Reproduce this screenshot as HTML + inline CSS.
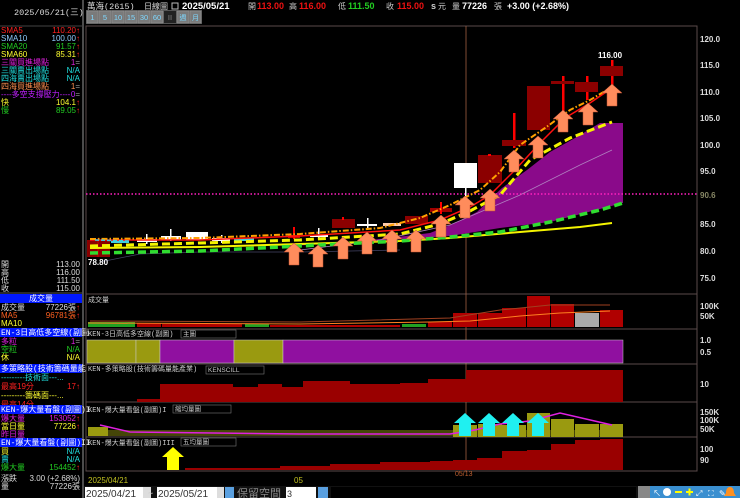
<!DOCTYPE html><html><head><meta charset="utf-8"><style>
body{margin:0;background:#000;width:740px;height:498px;overflow:hidden}
svg{display:block}
text{font-family:"Liberation Sans","Noto Sans CJK TC",sans-serif}
.s{font-family:"Liberation Mono","Noto Sans CJK TC",monospace;font-size:8px}
</style></head><body>
<svg width="740" height="498" viewBox="0 0 740 498" xmlns="http://www.w3.org/2000/svg">
<rect width="740" height="498" fill="#000"/>
<!-- left panel -->
<line x1="83" y1="0" x2="83" y2="498" stroke="#666" stroke-width="1.5"/>
<line x1="0" y1="26" x2="83" y2="26" stroke="#444"/>
<text x="14" y="15" fill="#ddd" class="s" style="font-size:8.5px">2025/05/21(三)</text>
<g class="s" font-size="8">
<text x="1" y="33" fill="#ff2020">SMA5</text><text x="80" y="33" fill="#ff2020" text-anchor="end">110.20↑</text>
<text x="1" y="41" fill="#8ecbff">SMA10</text><text x="80" y="41" fill="#8ecbff" text-anchor="end">100.00<tspan fill="#f22">↑</tspan></text>
<text x="1" y="49" fill="#22cc22">SMA20</text><text x="80" y="49" fill="#22cc22" text-anchor="end">91.57<tspan fill="#f22">↑</tspan></text>
<text x="1" y="57" fill="#ffff30">SMA60</text><text x="80" y="57" fill="#ffff30" text-anchor="end">85.31<tspan fill="#f22">↑</tspan></text>
<text x="1" y="65" fill="#e020e0">三關買進場點</text><text x="80" y="65" fill="#e020e0" text-anchor="end">1<tspan fill="#999">=</tspan></text>
<text x="1" y="73" fill="#20e0e0">三關賣出場點</text><text x="80" y="73" fill="#20e0e0" text-anchor="end">N/A</text>
<text x="1" y="81" fill="#20e0e0">四海賣出場點</text><text x="80" y="81" fill="#20e0e0" text-anchor="end">N/A</text>
<text x="1" y="89" fill="#ff9050">四海買進場點</text><text x="80" y="89" fill="#ff9050" text-anchor="end">1<tspan fill="#999">=</tspan></text>
<text x="1" y="97" fill="#c020ff">----多空支撐壓力----</text><text x="80" y="97" fill="#c020ff" text-anchor="end">0<tspan fill="#999">=</tspan></text>
<text x="1" y="105" fill="#ffff30">快</text><text x="80" y="105" fill="#ffff30" text-anchor="end">104.1<tspan fill="#f22">↑</tspan></text>
<text x="1" y="113" fill="#22cc22">慢</text><text x="80" y="113" fill="#22cc22" text-anchor="end">89.05<tspan fill="#f22">↑</tspan></text>
<text x="1" y="267" fill="#ddd">開</text><text x="80" y="267" fill="#ddd" text-anchor="end">113.00</text>
<text x="1" y="275" fill="#ddd">高</text><text x="80" y="275" fill="#ddd" text-anchor="end">116.00</text>
<text x="1" y="283" fill="#ddd">低</text><text x="80" y="283" fill="#ddd" text-anchor="end">111.50</text>
<text x="1" y="291" fill="#ddd">收</text><text x="80" y="291" fill="#ddd" text-anchor="end">115.00</text>
</g>
<line x1="0" y1="293" x2="83" y2="293" stroke="#555"/>
<rect x="0" y="294" width="82" height="9" fill="#0018ff"/>
<text x="41" y="301" fill="#fff" class="s" text-anchor="middle">成交量</text>
<g class="s">
<text x="1" y="310" fill="#ddd">成交量</text><text x="80" y="310" fill="#ddd" text-anchor="end">77226張<tspan fill="#f22">↑</tspan></text>
<text x="1" y="318" fill="#ff6020">MA5</text><text x="80" y="318" fill="#ff6020" text-anchor="end">96781張<tspan fill="#f22">↑</tspan></text>
<text x="1" y="326" fill="#ffff30">MA10</text>
</g>
<rect x="0" y="328" width="82" height="9" fill="#0018ff"/>
<text x="1" y="335" fill="#fff" class="s">EN-3日高低多空線(副圖</text>
<g class="s">
<text x="1" y="344" fill="#e020e0">多粒</text><text x="80" y="344" fill="#e020e0" text-anchor="end">1<tspan fill="#999">=</tspan></text>
<text x="1" y="352" fill="#22cc22">空粒</text><text x="80" y="352" fill="#22cc22" text-anchor="end">N/A</text>
<text x="1" y="360" fill="#ffff30">休</text><text x="80" y="360" fill="#ffff30" text-anchor="end">N/A</text>
</g>
<rect x="0" y="364" width="82" height="9" fill="#0018ff"/>
<text x="1" y="371" fill="#fff" class="s">多策略股(技術籌碼量能</text>
<g class="s">
<text x="1" y="380" fill="#20e0e0">---------技術面---...</text>
<text x="1" y="389" fill="#ff2020">最高19分</text><text x="80" y="389" fill="#ff2020" text-anchor="end">17↑</text>
<text x="1" y="398" fill="#ffff30">---------籌碼面---...</text>
<text x="1" y="407" fill="#ff2020">最高14分</text>
</g>
<rect x="0" y="405" width="82" height="9" fill="#0018ff"/>
<text x="1" y="412" fill="#fff" class="s">KEN-爆大量看盤(副圖)I</text>
<g class="s">
<text x="1" y="421" fill="#e020e0">爆大量</text><text x="80" y="421" fill="#e020e0" text-anchor="end">153052<tspan fill="#f22">↑</tspan></text>
<text x="1" y="429" fill="#ffff30">當日量</text><text x="80" y="429" fill="#ffff30" text-anchor="end">77226<tspan fill="#f22">↑</tspan></text>
<text x="1" y="437" fill="#e020e0">昨日量</text>
</g>
<rect x="0" y="438" width="82" height="9" fill="#0018ff"/>
<text x="1" y="445" fill="#fff" class="s">EN-爆大量看盤(副圖)II</text>
<g class="s">
<text x="1" y="454" fill="#ffff30">買</text><text x="80" y="454" fill="#20e0e0" text-anchor="end">N/A</text>
<text x="1" y="462" fill="#20e0e0">賣</text><text x="80" y="462" fill="#20e0e0" text-anchor="end">N/A</text>
<text x="1" y="470" fill="#22cc22">爆大量</text><text x="80" y="470" fill="#22cc22" text-anchor="end">154452<tspan fill="#f22">↑</tspan></text>
<text x="1" y="481" fill="#ddd">漲跌</text><text x="80" y="481" fill="#ddd" text-anchor="end">3.00 (+2.68%)</text>
<text x="1" y="489" fill="#ddd">量</text><text x="80" y="489" fill="#ddd" text-anchor="end">77226張</text>
</g>
<!-- header -->
<g font-size="9">
<text x="87" y="9" fill="#ddd" class="s" style="font-size:8.5px">萬海(2615)</text>
<text x="144" y="9" fill="#ddd" class="s">日線圖</text>
<rect x="172" y="3" width="6" height="6" fill="none" stroke="#bbb"/>
<text x="182" y="9" fill="#fff" font-weight="bold" font-size="9.5">2025/05/21</text>
<text x="248" y="9" fill="#ccc" class="s">開</text><text x="257" y="9" fill="#ee1111" font-weight="bold">113.00</text>
<text x="289" y="9" fill="#ccc" class="s">高</text><text x="299" y="9" fill="#ee1111" font-weight="bold">116.00</text>
<text x="338" y="9" fill="#ccc" class="s">低</text><text x="348" y="9" fill="#22cc22" font-weight="bold">111.50</text>
<text x="386" y="9" fill="#ccc" class="s">收</text><text x="397" y="9" fill="#ee1111" font-weight="bold">115.00</text>
<text x="431" y="9" fill="#ccc" font-weight="bold">s</text><text x="438" y="9" fill="#ccc" class="s">元</text>
<text x="452" y="9" fill="#ccc" class="s">量</text><text x="462" y="9" fill="#fff" font-weight="bold">77226</text><text x="494" y="9" fill="#ccc" class="s">張</text>
<text x="507" y="9" fill="#fff" font-weight="bold">+3.00 (+2.68%)</text>
</g>
<rect x="86" y="10" width="116" height="14" fill="#555"/>
<g fill="#7a7a7a" stroke="#999" stroke-width=".5">
<rect x="87" y="11" width="11" height="12"/><rect x="99" y="11" width="12" height="12"/><rect x="112" y="11" width="12" height="12"/><rect x="125" y="11" width="12" height="12"/><rect x="138" y="11" width="12" height="12"/><rect x="151" y="11" width="12" height="12"/><rect x="177" y="11" width="12" height="12"/><rect x="190" y="11" width="11" height="12"/>
</g>
<rect x="164" y="11" width="12" height="12" fill="#222"/>
<g fill="#7fd8ff" font-size="7.5" text-anchor="middle">
<text x="92.5" y="20">1</text><text x="105" y="20">5</text><text x="118" y="20">10</text><text x="131" y="20">15</text><text x="144" y="20">30</text><text x="157" y="20">60</text><text x="170" y="20" fill="#888">II</text><text x="183" y="20" class="s" style="font-size:7px">週</text><text x="195.5" y="20" class="s" style="font-size:7px">月</text>
</g>
<!-- chart frame -->
<rect x="86" y="26" width="611" height="445" fill="none" stroke="#5a4a4a"/>
<g stroke="#5a4a4a"><line x1="86" y1="294" x2="697" y2="294"/><line x1="86" y1="329" x2="697" y2="329"/><line x1="86" y1="364" x2="697" y2="364"/><line x1="86" y1="402" x2="697" y2="402"/><line x1="86" y1="437" x2="697" y2="437"/></g>
<line x1="466" y1="26" x2="466" y2="471" stroke="#a06040" stroke-width=".8"/>
<!-- price axis -->
<g fill="#ddd" font-size="8" font-weight="bold">
<text x="700" y="42">120.0</text><text x="700" y="68">115.0</text><text x="700" y="95">110.0</text><text x="700" y="121">105.0</text><text x="700" y="148">100.0</text><text x="700" y="174">95.0</text><text x="700" y="198" fill="#886">90.6</text><text x="700" y="227">85.0</text><text x="700" y="254">80.0</text><text x="700" y="281">75.0</text>
<text x="700" y="309">100K</text><text x="700" y="319">50K</text><text x="700" y="343">1.0</text><text x="700" y="355">0.5</text><text x="700" y="387">10</text>
<text x="700" y="415">150K</text><text x="700" y="423">100K</text><text x="700" y="432">50K</text><text x="700" y="452">100</text><text x="700" y="463">90</text>
</g>
<!-- purple area -->
<polygon fill="#8a0a8a" points="290,245 340,243 390,238 430,233 453,224 477,212 502,188 527,170 550,152 575,138 600,123 623,123 623,203 550,222 500,228 450,236 390,240 340,243 290,246"/>
<polyline fill="none" stroke="#b080c0" stroke-width=".8" points="300,250 380,240 450,225 520,195 580,165 612,150"/>
<line x1="86" y1="194" x2="697" y2="194" stroke="#ff20c0" stroke-width="1.5" stroke-dasharray="1.5,2"/>
<polyline fill="none" stroke="#446" stroke-width=".8" points="100,262 140,254 200,252 300,252 400,250"/>
<!-- candles -->
<rect x="87" y="240" width="23" height="17" fill="#8b0000"/>
<line x1="98" y1="238" x2="98" y2="257" stroke="#c00"/>
<g fill="#fff">
<rect x="111" y="240" width="18" height="3" fill="#40d0e0"/>
<rect x="137" y="239" width="20" height="3"/><rect x="146" y="234" width="1.5" height="10"/>
<rect x="161" y="236" width="20" height="4"/><rect x="170" y="229" width="1.5" height="12"/>
<rect x="186" y="232" width="22" height="8"/>
<rect x="212" y="238" width="18" height="3"/><rect x="221" y="235" width="1.5" height="8"/>
<rect x="234" y="238" width="20" height="3" fill="#40d0e0"/>
<rect x="310" y="235" width="18" height="2"/><rect x="318" y="228" width="1.5" height="12"/>
<rect x="357" y="224" width="20" height="2"/><rect x="367" y="218" width="1.5" height="11"/>
<rect x="383" y="223" width="18" height="3" fill="#ffccaa"/>
</g>
<rect x="288" y="235" width="12" height="3" fill="#c00"/><rect x="293" y="227" width="2" height="12" fill="#f00"/>
<rect x="332" y="219" width="23" height="9" fill="#8b0000"/><rect x="342" y="217" width="2" height="3" fill="#f00"/>
<rect x="405" y="216" width="23" height="8" fill="#8b0000"/>
<rect x="430" y="208" width="22" height="4" fill="#a00000"/><rect x="440" y="202" width="2" height="12" fill="#f00"/>
<rect x="465" y="187" width="1.5" height="9" fill="#fff"/>
<rect x="454" y="163" width="23" height="25" fill="#fff"/>
<rect x="478" y="155" width="24" height="28" fill="#8b0000"/><rect x="488" y="154" width="3" height="2" fill="#f00"/>
<rect x="513" y="113" width="2.5" height="35" fill="#f00"/><rect x="502" y="140" width="24" height="6" fill="#8b0000"/>
<rect x="527" y="86" width="23" height="44" fill="#8b0000"/>
<rect x="562" y="76" width="2.5" height="36" fill="#f00"/><rect x="551" y="81" width="23" height="3" fill="#8b0000"/>
<rect x="586" y="76" width="2.5" height="24" fill="#f00"/><rect x="575" y="82" width="23" height="10" fill="#8b0000"/>
<rect x="611" y="60" width="2.5" height="25" fill="#f00"/><rect x="600" y="66" width="23" height="10" fill="#8b0000"/>
<text x="598" y="58" fill="#fff" font-size="8" font-weight="bold">116.00</text>
<text x="88" y="265" fill="#fff" font-size="8" font-weight="bold">78.80</text>
<!-- MA lines -->
<polyline fill="none" stroke="#f4f400" stroke-width="2" points="90,248 200,247 300,244 400,241 450,238 520,232 580,227 612,223"/>
<polyline fill="none" stroke="#30dd30" stroke-width="3.5" stroke-dasharray="8,4" points="90,253 200,251 300,246 400,241 450,237 500,232 550,222 600,210 623,203"/>
<polyline fill="none" stroke="#f4f400" stroke-width="3" stroke-dasharray="8,4" points="90,246 200,243 300,240 400,234 440,224 470,211 500,195 530,160 570,138 612,122"/>
<polyline fill="none" stroke="#ff1010" stroke-width="1.5" points="90,240 200,240 300,236 400,230 440,220 470,207 490,195 515,170 540,143 565,118 590,103 612,88"/>
<polyline fill="none" stroke="#ffa000" stroke-width="2" stroke-dasharray="6,2,1.5,2" points="90,239 200,238 300,234 380,228 420,218 450,205 480,190 500,172 520,145 545,128 570,110 590,100 612,87"/>
<polyline fill="none" stroke="#40d0e0" stroke-width="1.5" stroke-dasharray="4,2" points="95,240 130,241"/>
<!-- arrows -->
<g fill="#ff8c5c" stroke="#c05030" stroke-width=".5">
<path d="M294 243l10 9h-5v13h-10v-13h-5z"/><path d="M318 245l10 9h-5v13h-10v-13h-5z"/><path d="M343 237l10 9h-5v13h-10v-13h-5z"/><path d="M367 232l10 9h-5v13h-10v-13h-5z"/><path d="M392 230l10 9h-5v13h-10v-13h-5z"/><path d="M416 230l10 9h-5v13h-10v-13h-5z"/><path d="M441 215l10 9h-5v13h-10v-13h-5z"/><path d="M465 196l10 9h-5v13h-10v-13h-5z"/><path d="M490 189l10 9h-5v13h-10v-13h-5z"/><path d="M514 150l10 9h-5v13h-10v-13h-5z"/><path d="M538 136l10 9h-5v13h-10v-13h-5z"/><path d="M563 110l10 9h-5v13h-10v-13h-5z"/><path d="M588 103l10 9h-5v13h-10v-13h-5z"/><path d="M612 84l10 9h-5v13h-10v-13h-5z"/>
</g>
<!-- volume panel -->
<text x="88" y="302" fill="#ccc" class="s" style="font-size:7px">成交量</text>
<g fill="#22a022"><rect x="88" y="322" width="47" height="5"/><rect x="245" y="324" width="24" height="3"/><rect x="402" y="324" width="24" height="3"/></g>
<g fill="#b00000"><rect x="137" y="323" width="24" height="4"/><rect x="162" y="324" width="80" height="3"/><rect x="270" y="325" width="130" height="2"/><rect x="428" y="322" width="24" height="5"/>
<rect x="453" y="313" width="24" height="14"/><rect x="478" y="313" width="24" height="14"/><rect x="502" y="308" width="24" height="19"/><rect x="527" y="296" width="23" height="31"/><rect x="551" y="304" width="23" height="23"/><rect x="600" y="310" width="23" height="17"/></g>
<rect x="575" y="313" width="24" height="14" fill="#aaa"/>
<polyline fill="none" stroke="#ff8020" stroke-width="1" points="88,323 300,324 430,322 470,321 520,316 560,313 610,311"/>
<polyline fill="none" stroke="#a04020" stroke-width="1" points="90,321 300,322 450,318 500,310 550,305 610,305"/>
<!-- panel 2 -->
<text x="88" y="336" fill="#ccc" class="s" style="font-size:7px">KEN-3日高低多空線(副圖)</text>
<rect x="181" y="330" width="55" height="8" fill="#000" stroke="#777" stroke-width=".6"/><text x="183" y="336" fill="#ccc" class="s" style="font-size:6.5px">主圖</text>
<g stroke="#ccc" stroke-width=".5">
<rect x="87" y="340" width="49" height="23" fill="#9a9a10"/><rect x="136" y="340" width="24" height="23" fill="#9a9a10"/>
<rect x="160" y="340" width="74" height="23" fill="#9010a0"/><rect x="234" y="340" width="49" height="23" fill="#9a9a10"/>
<rect x="283" y="340" width="340" height="23" fill="#9010a0"/>
</g>
<!-- panel 3 -->
<text x="88" y="371" fill="#ccc" class="s" style="font-size:7px">KEN-多策略股(技術籌碼量能產業)</text>
<rect x="206" y="366" width="58" height="8" fill="#000" stroke="#777" stroke-width=".6"/><text x="208" y="372" fill="#ccc" font-size="6.5">KENSCILL</text>
<path fill="#9a0000" d="M137 401V399H160V384H233V387H258V384H282V387H303V381H350V384H400V383H428V379H466V370H623V402H137Z"/>
<!-- panel 4 -->
<text x="88" y="412" fill="#ccc" class="s" style="font-size:7px">KEN-爆大量看盤(副圖)I</text>
<rect x="173" y="405" width="58" height="8" fill="#000" stroke="#777" stroke-width=".6"/><text x="175" y="411" fill="#ccc" class="s" style="font-size:6.5px">縮均量圖</text>
<rect x="88" y="430" width="535" height="6" fill="#8a8a10" opacity=".5"/>
<g fill="#9a9a10"><rect x="88" y="427" width="20" height="9"/><rect x="453" y="425" width="24" height="12"/><rect x="478" y="424" width="24" height="13"/><rect x="502" y="425" width="24" height="12"/><rect x="527" y="413" width="23" height="24"/><rect x="551" y="419" width="23" height="18"/><rect x="575" y="424" width="24" height="13"/><rect x="600" y="424" width="23" height="13"/></g>
<polyline fill="none" stroke="#e020e0" stroke-width="1.5" points="100,425 130,432 300,434 450,434 475,430 500,424 530,421 560,413 612,425"/>
<g fill="#20f0f0"><path d="M465 413l11 10h-5v13h-12v-13h-5z"/><path d="M489 413l11 10h-5v13h-12v-13h-5z"/><path d="M513 413l11 10h-5v13h-12v-13h-5z"/><path d="M538 413l11 10h-5v13h-12v-13h-5z"/></g>
<!-- panel 5 -->
<text x="88" y="445" fill="#ccc" class="s" style="font-size:7px">KEN-爆大量看盤(副圖)III</text>
<rect x="181" y="438" width="55" height="8" fill="#000" stroke="#777" stroke-width=".6"/><text x="183" y="444" fill="#ccc" class="s" style="font-size:6.5px">五均量圖</text>
<path fill="#9a0000" d="M185 470V468H280V466H330V464H380V462H430V461H453V460H477V458H502V451H527V450H551V444H575V440H600V439H623V470Z"/>
<path fill="#ffff00" d="M173 447l11 10h-5v13h-12v-13h-5z"/>
<!-- dates -->
<text x="88" y="483" fill="#c0c020" font-size="8">2025/04/21</text>
<text x="294" y="483" fill="#c0c020" font-size="8">05</text>
<text x="455" y="476" fill="#c06030" font-size="7">05/13</text>
<!-- bottom controls -->
<rect x="84" y="486" width="654" height="12" fill="#111"/>
<rect x="85" y="487" width="58" height="11" fill="#fff"/><text x="86" y="497" fill="#333" font-size="10">2025/04/21</text>
<rect x="143" y="487" width="8" height="11" fill="#ddd"/>
<text x="148" y="496" fill="#ccc" font-size="9">~</text>
<rect x="157" y="487" width="60" height="11" fill="#fff"/><text x="158" y="497" fill="#333" font-size="10">2025/05/21</text>
<rect x="217" y="487" width="7" height="11" fill="#ddd"/>
<rect x="225" y="487" width="9" height="11" fill="#5aa0e0"/>
<text x="237" y="497" fill="#888" font-size="11" class="s" style="font-size:11px">保留空間</text>
<rect x="286" y="487" width="30" height="11" fill="#fff"/><text x="287" y="497" fill="#333" font-size="9">3</text>
<rect x="318" y="487" width="10" height="11" fill="#5aa0e0"/>
<rect x="331" y="487" width="305" height="11" fill="#000"/>
<rect x="638" y="486" width="12" height="12" fill="#888"/>
<rect x="650" y="486" width="90" height="12" fill="#3a8fd0"/>
<g fill="#fff" font-size="8"><text x="653" y="496">↖</text><circle cx="667" cy="492" r="4" fill="#fff"/><rect x="675" y="491" width="7" height="2" fill="#ff0"/><rect x="686" y="491" width="7" height="2" fill="#ff0"/><rect x="688.5" y="488.5" width="2" height="7" fill="#ff0"/><text x="696" y="496">⤢</text><text x="708" y="496">⛶</text><text x="719" y="496">✎</text></g>
<path d="M730 487c-3 0-4 3-4 6l-2 3h12l-2-3c0-3-1-6-4-6z" fill="#ff9020"/>
</svg>
</body></html>
